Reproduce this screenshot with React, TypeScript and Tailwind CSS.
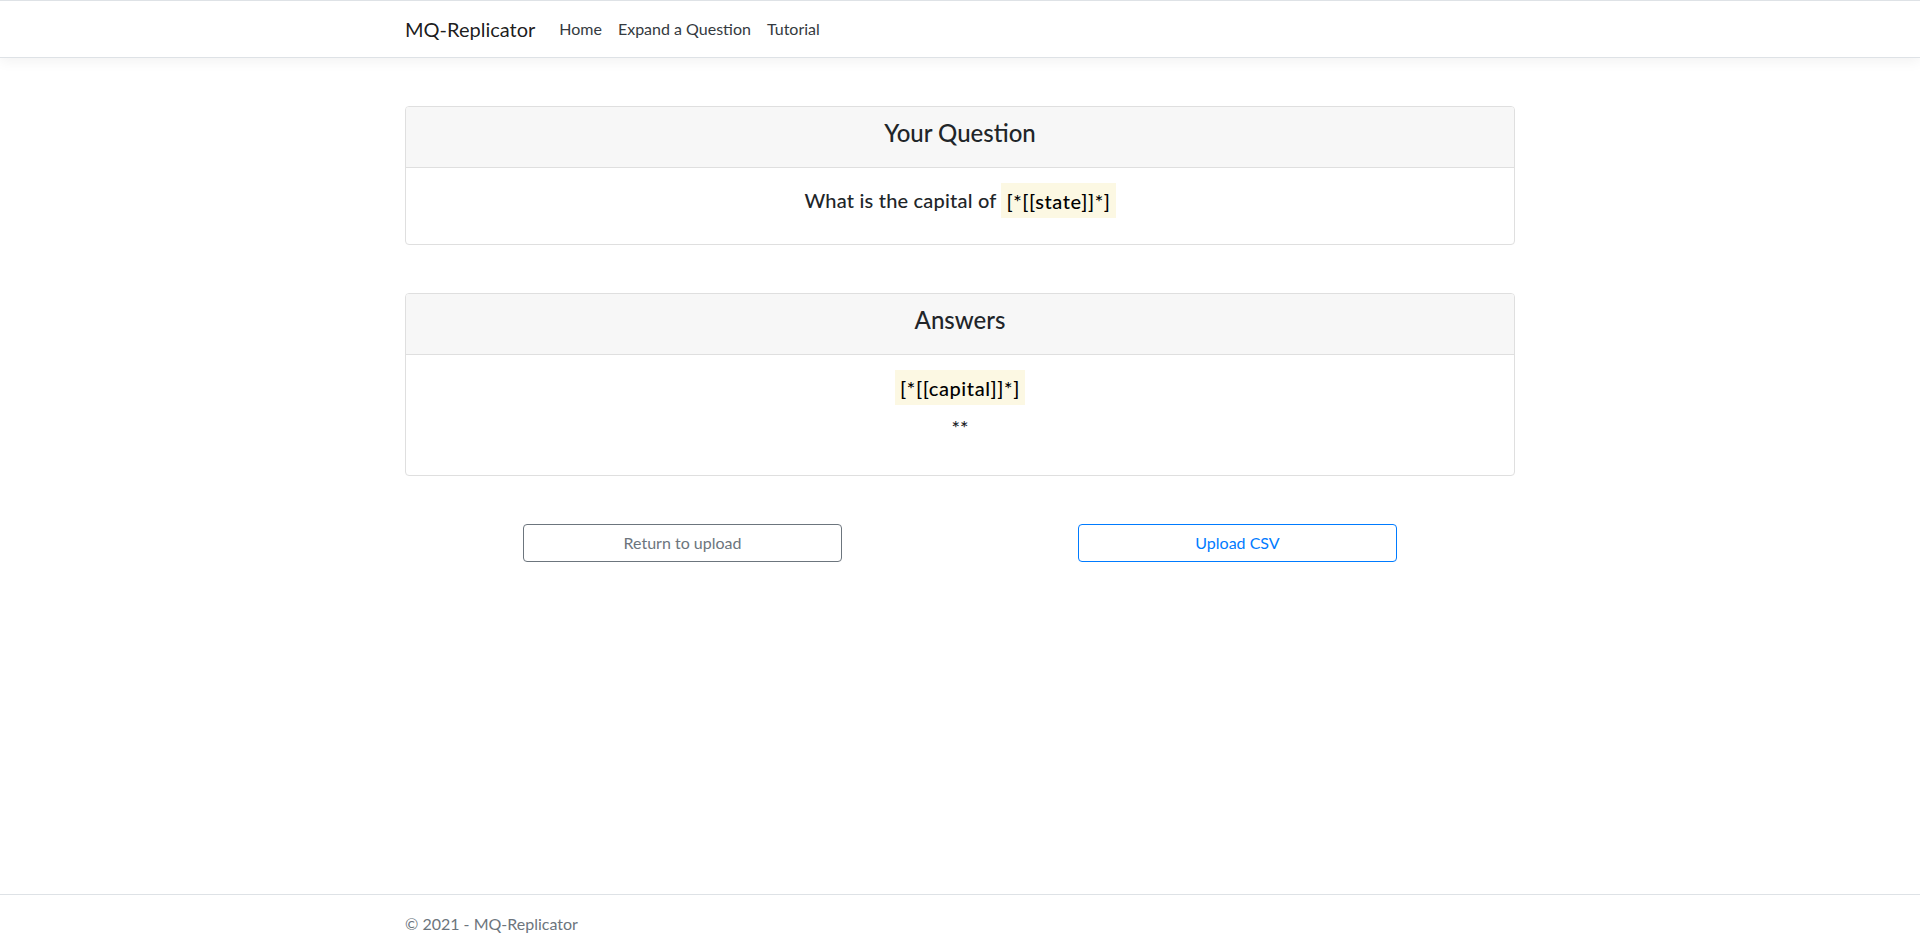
import React from "react";

function Card({ title, children }: { title: string; children: React.ReactNode }) {
  return (
    <div className="border border-[#dfdfdf] rounded-[4px] bg-white">
      <div className="bg-[#f7f7f7] border-b border-[#dfdfdf] rounded-t-[3px] px-5 pt-3 pb-3">
        <h4 className="text-[24px] leading-[28px] font-medium text-center mb-2">{title}</h4>
      </div>
      {children}
    </div>
  );
}

function Mark({ children }: { children: React.ReactNode }) {
  return (
    <mark className="bg-[#fcf8e3] text-black px-[5px] py-[5.5px] tracking-[0.6px]">{children}</mark>
  );
}

export default function App() {
  return (
    <div className="min-h-screen flex flex-col bg-white text-[#212529] font-['Lato','Segoe_UI',sans-serif] text-[16px] leading-6">
      <header className="border-t border-b border-[#dee2e6] bg-white shadow-[0_4px_12px_rgba(0,0,0,0.05)]">
        <nav className="w-[1140px] mx-auto px-[15px] py-2 flex items-center">
          <a className="text-[20px] leading-[30px] py-[5px] mr-4 text-[rgba(0,0,0,0.9)]" href="#">MQ-Replicator</a>
          <ul className="flex">
            <li><a className="block px-2 py-2 text-[#343a40]" href="#">Home</a></li>
            <li><a className="block px-2 py-2 text-[#343a40]" href="#">Expand a Question</a></li>
            <li><a className="block px-2 py-2 text-[#343a40]" href="#">Tutorial</a></li>
          </ul>
        </nav>
      </header>

      <main className="w-[1140px] mx-auto px-[15px] pt-[48px] flex flex-col gap-[48px] self-center">
        <Card title="Your Question">
          <div className="px-5 pt-5 pb-8 text-center">
            <h5 className="text-[20px] leading-6 font-medium tracking-[0.2px]">
              What is the capital of <Mark>[*[[state]]*]</Mark>
            </h5>
          </div>
        </Card>

        <Card title="Answers">
          <div className="px-5 pt-5 pb-[36px] text-center flex flex-col gap-4">
            <h5 className="text-[20px] leading-6 font-medium">
              <Mark>[*[[capital]]*]</Mark>
            </h5>
            <h5 className="text-[20px] leading-6 font-medium">**</h5>
          </div>
        </Card>

        <div className="grid grid-cols-2">
          <div className="flex justify-center">
            <button className="w-[319px] border border-[#6c757d] text-[#6c757d] rounded-[4px] py-[6px] px-3 text-[16px] leading-6 bg-white">
              Return to upload
            </button>
          </div>
          <div className="flex justify-center">
            <button className="w-[319px] border border-[#007bff] text-[#007bff] rounded-[4px] py-[6px] px-3 text-[16px] leading-6 bg-white">
              Upload CSV
            </button>
          </div>
        </div>
      </main>

      <footer className="mt-auto border-t border-[#dee2e6] h-[58px] text-[#6c757d]">
        <div className="w-[1140px] mx-auto px-[15px] leading-[57px] whitespace-nowrap">© 2021 - MQ-Replicator</div>
      </footer>
    </div>
  );
}
